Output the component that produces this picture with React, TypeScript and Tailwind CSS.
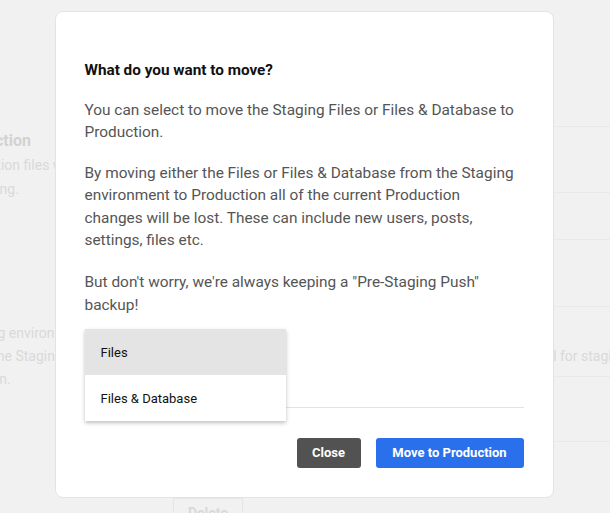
import React from "react";

const font = { fontFamily: "Roboto, 'Liberation Sans', sans-serif" };

const Backdrop: React.FC = () => {
  return (
    <div className="min-h-[513px] w-[610px] overflow-hidden bg-[#f1f1f1] text-[#d9d9d9]" style={font}>
      <div className="h-[22px] flex items-end gap-10 pl-[150px] text-[14px] leading-none">
        <span className="-mb-1">Staging</span>
        <span className="-mb-1">Production</span>
        <span className="-mb-1 bg-[#eeeeee] px-4">Settings</span>
      </div>
      <div className="grid grid-cols-[300px_1fr] ml-[-48px]">
        <div className="flex flex-col whitespace-nowrap">
          <div className="pt-[107px] text-[16px] font-bold leading-6 text-[#d2d2d2]">Production</div>
          <div className="text-[14px] leading-6">Production files will be pushed</div>
          <div className="text-[14px] leading-6 pl-[1px]">to staging.</div>
          <div className="mt-[121px] text-[14px] leading-[23px]">
            <div className="pl-[6px]">Staging environment can be pushed to Production at any time.</div>
            <div className="pl-[6px]">
              Only one Staging site can be used at a time, and the Staging site is never indexed and is reserved for staging
            </div>
            <div className="pl-[8px]">domain.</div>
          </div>
        </div>
        <div className="flex flex-col">
          <div className="h-[105px] border-b border-[#e9e9e9]" />
          <div className="h-[66px] border-b border-[#e9e9e9]" />
          <div className="h-[47px] border-b border-[#e9e9e9]" />
          <div className="h-[67px] border-b border-[#e9e9e9]" />
          <div className="h-[70px] border-b border-[#e9e9e9]" />
          <div className="h-[65px] border-b border-[#e9e9e9]" />
        </div>
      </div>
      <div className="ml-[173px] mt-[56px] w-[70px] h-[30px] border border-[#e6e6e6] text-[14px] font-bold flex items-center justify-center">
        Delete
      </div>
    </div>
  );
};

const Modal: React.FC = () => {
  return (
    <div className="fixed inset-0 flex justify-center pt-[11px] pr-[2px]" style={font}>
      <div className="w-[499px] h-[487px] bg-white rounded-[8px] border border-[#e3e3e3] px-[29px] pt-[48px] pb-[29px] flex flex-col">
        <h3 className="text-[15.3px] font-bold leading-5 text-[#111] mb-[19px]">What do you want to move?</h3>
        <div className="pr-[5px] text-[15.4px] leading-[22.4px] text-[#555]">
          <p className="mb-[18px]">
            You can select to move the Staging Files or Files &amp; Database to Production.
          </p>
          <p className="mb-5">
            By moving either the Files or Files &amp; Database from the Staging environment to Production all of
            the current Production changes will be lost. These can include new users, posts, settings, files etc.
          </p>
          <p>But don't worry, we're always keeping a "Pre-Staging Push" backup!</p>
        </div>
        <div className="relative h-[95px] border-b border-[#e2e2e2]">
          <ul className="absolute left-0 top-[13px] w-[201px] bg-white shadow-[0_2px_4px_rgba(0,0,0,0.25)] text-[13px] text-[#111]">
            <li className="h-[46px] flex items-center pl-4 bg-[#e4e4e4]">Files</li>
            <li className="h-[46px] flex items-center pl-4">Files &amp; Database</li>
          </ul>
        </div>
        <div className="mt-[30px] flex justify-end gap-[15px]">
          <button className="h-[30px] w-[64px] rounded-[3px] bg-[#525252] text-white text-[13px] font-bold">
            Close
          </button>
          <button className="h-[30px] w-[148px] rounded-[3px] bg-[#2a6fec] text-white text-[13px] font-bold">
            Move to Production
          </button>
        </div>
      </div>
    </div>
  );
};

export default function App() {
  return (
    <div className="relative">
      <Backdrop />
      <Modal />
    </div>
  );
}
